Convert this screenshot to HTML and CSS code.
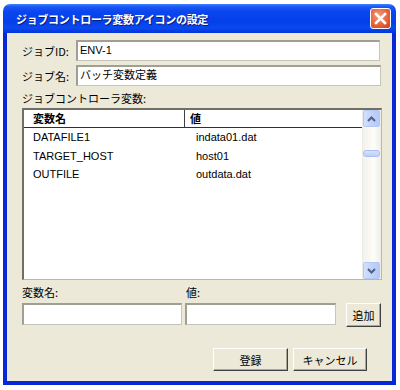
FILE: index.html
```html
<!DOCTYPE html>
<html lang="ja">
<head>
<meta charset="utf-8">
<title>ジョブコントローラ変数アイコンの設定</title>
<link rel="stylesheet" href="styles.css">
</head>
<body>
<div class="window">
  <div class="titlebar">
    <span class="title">ジョブコントローラ変数アイコンの設定</span>
    <span class="close">
      <svg width="13" height="13" viewBox="0 0 13 13"><path d="M2 2 L11 11 M11 2 L2 11" stroke="#fff" stroke-width="2.6" stroke-linecap="square"/></svg>
    </span>
  </div>
  <div class="client">
    <div class="field-row">
      <span class="label">ジョブID:</span>
      <div class="input r1">ENV-1</div>
    </div>
    <div class="field-row second">
      <span class="label">ジョブ名:</span>
      <div class="input r2">バッチ変数定義</div>
    </div>
    <div class="section-label">ジョブコントローラ変数:</div>
    <div class="listbox">
      <div class="list-main">
        <div class="list-header">
          <div class="hcell c1">変数名</div>
          <div class="hcell c2">値</div>
        </div>
        <div class="list-row"><span class="c1">DATAFILE1</span><span class="c2">indata01.dat</span></div>
        <div class="list-row"><span class="c1">TARGET_HOST</span><span class="c2">host01</span></div>
        <div class="list-row"><span class="c1">OUTFILE</span><span class="c2">outdata.dat</span></div>
      </div>
      <div class="scrollbar">
        <div class="sbtn">
          <svg width="9" height="6" viewBox="0 0 9 6"><path d="M1 5 L4.5 1.5 L8 5" fill="none" stroke="#4d6185" stroke-width="2"/></svg>
        </div>
        <div class="track">
          <div class="thumb"></div>
        </div>
        <div class="sbtn">
          <svg width="9" height="6" viewBox="0 0 9 6"><path d="M1 1 L4.5 4.5 L8 1" fill="none" stroke="#4d6185" stroke-width="2"/></svg>
        </div>
      </div>
    </div>
    <div class="edit-labels">
      <span class="el1">変数名:</span>
      <span class="el2">値:</span>
    </div>
    <div class="edit-row">
      <div class="input e1"></div>
      <div class="input e2"></div>
      <button class="btn add">追加</button>
    </div>
    <div class="footer">
      <button class="btn ok">登録</button>
      <button class="btn cancel">キャンセル</button>
    </div>
  </div>
</div>
</body>
</html>
```

FILE: styles.css
```css
html, body {
  margin: 0;
  padding: 0;
  background: #ffffff;
}
body {
  padding: 4px 0 0 3px;
  font-family: "Liberation Sans", "Noto Sans CJK JP", sans-serif;
  font-size: 11px;
  color: #000;
}
.window {
  width: 393px;
  height: 381px;
  display: flex;
  flex-direction: column;
}
.titlebar {
  height: 29px;
  border-radius: 7px 7px 0 0;
  background: linear-gradient(to bottom, #3c82ff 0px, #1a55f5 3px, #0a45ee 8px, #0440ea 18px, #0a48f0 24px, #0036d8 29px);
  display: flex;
  align-items: center;
  padding: 0 5px 0 13px;
  box-sizing: border-box;
}
.title {
  flex: 1;
  color: #fff;
  font-weight: bold;
  font-size: 11px;
  letter-spacing: -0.3px;
  text-shadow: 1px 1px 0 #0a1a80;
  font-family: "Noto Sans CJK JP", sans-serif;
}
.close {
  width: 21px;
  height: 21px;
  box-sizing: border-box;
  border: 1px solid #fff;
  border-radius: 3px;
  background: radial-gradient(circle at 40% 35%, #f49a7a 0%, #e5643c 55%, #c9401c 100%);
  display: flex;
  align-items: center;
  justify-content: center;
}
.client {
  flex: 1;
  background: #ece9d8;
  border: 4px solid #0828d8;
  border-top: none;
  padding: 7px 11px 0 15px;
  display: flex;
  flex-direction: column;
}
.field-row {
  display: flex;
  align-items: center;
  height: 21px;
}
.field-row.second {
  margin-top: 4px;
}
.label {
  width: 54px;
  font-family: "Noto Sans CJK JP", sans-serif;
}
.input {
  box-sizing: border-box;
  background: #fff;
  border: 1px solid #c7c5b8;
  border-top: 2px solid #a09f94;
  border-left: 2px solid #a09f94;
  padding-left: 2px;
  line-height: 17px;
  font-family: "Liberation Sans", "Noto Sans CJK JP", sans-serif;
}
.r1 {
  width: 304px;
  height: 21px;
}
.r2 {
  width: 305px;
  height: 21px;
}
.section-label {
  margin-top: 5px;
  line-height: 14px;
  height: 14px;
  margin-bottom: 3px;
  font-family: "Noto Sans CJK JP", sans-serif;
}
.listbox {
  width: 360px;
  height: 172px;
  box-sizing: border-box;
  background: #fff;
  border: 1px solid #b9b7ac;
  border-top: 2px solid #716f64;
  border-left: 2px solid #716f64;
  display: flex;
}
.list-main {
  flex: 1;
}
.list-header {
  display: flex;
  height: 17px;
  border-bottom: 1px solid #303030;
  background: #fff;
}
.hcell {
  font-weight: bold;
  line-height: 17px;
  font-family: "Noto Sans CJK JP", sans-serif;
  box-sizing: border-box;
}
.hcell.c1 {
  width: 161px;
  padding-left: 9px;
  border-right: 1px solid #404040;
}
.hcell.c2 {
  padding-left: 5px;
}
.list-row {
  display: flex;
  height: 18.5px;
  line-height: 18.5px;
}
.list-row .c1 {
  width: 161px;
  padding-left: 9px;
  box-sizing: border-box;
}
.list-row .c2 {
  padding-left: 11px;
}
.scrollbar {
  width: 18px;
  display: flex;
  flex-direction: column;
  background: linear-gradient(to right, #f3f1ea, #fdfdfa 60%, #eeede5);
  border-left: 1px solid #eeede5;
}
.sbtn {
  height: 17px;
  box-sizing: border-box;
  margin: 0 1px 0 0;
  border: 1px solid #b4c8f6;
  border-radius: 2px;
  background: linear-gradient(to right, #d3e0fd, #c1d3fb 50%, #b5c9f8);
  display: flex;
  align-items: center;
  justify-content: center;
}
.track {
  flex: 1;
  padding-top: 23px;
}
.thumb {
  height: 7px;
  margin-right: 1px;
  box-sizing: border-box;
  border: 1px solid #a9bfef;
  border-radius: 3px;
  background: linear-gradient(to bottom, #d5e2fd, #bccffa);
}
.edit-labels {
  display: flex;
  height: 14px;
  line-height: 14px;
  margin-top: 5px;
  margin-bottom: 4px;
  font-family: "Noto Sans CJK JP", sans-serif;
}
.el1 {
  width: 164px;
}
.edit-row {
  display: flex;
  align-items: flex-start;
  height: 24px;
}
.e1 {
  width: 160px;
  height: 22px;
}
.e2 {
  width: 152px;
  height: 22px;
  margin-left: 3px;
}
.btn {
  box-sizing: border-box;
  margin: 0;
  padding: 0;
  background: #ece9d8;
  border: 1px solid;
  border-color: #ffffff #404040 #404040 #ffffff;
  box-shadow: inset -1px -1px 0 #aca899;
  font-family: "Noto Sans CJK JP", sans-serif;
  font-size: 11px;
  color: #000;
}
.add {
  width: 35px;
  height: 24px;
  margin-left: 10px;
}
.footer {
  display: flex;
  margin-top: 21px;
  padding-left: 191px;
}
.ok {
  width: 75px;
  height: 23px;
}
.cancel {
  width: 74px;
  height: 23px;
  margin-left: 5px;
}
```
